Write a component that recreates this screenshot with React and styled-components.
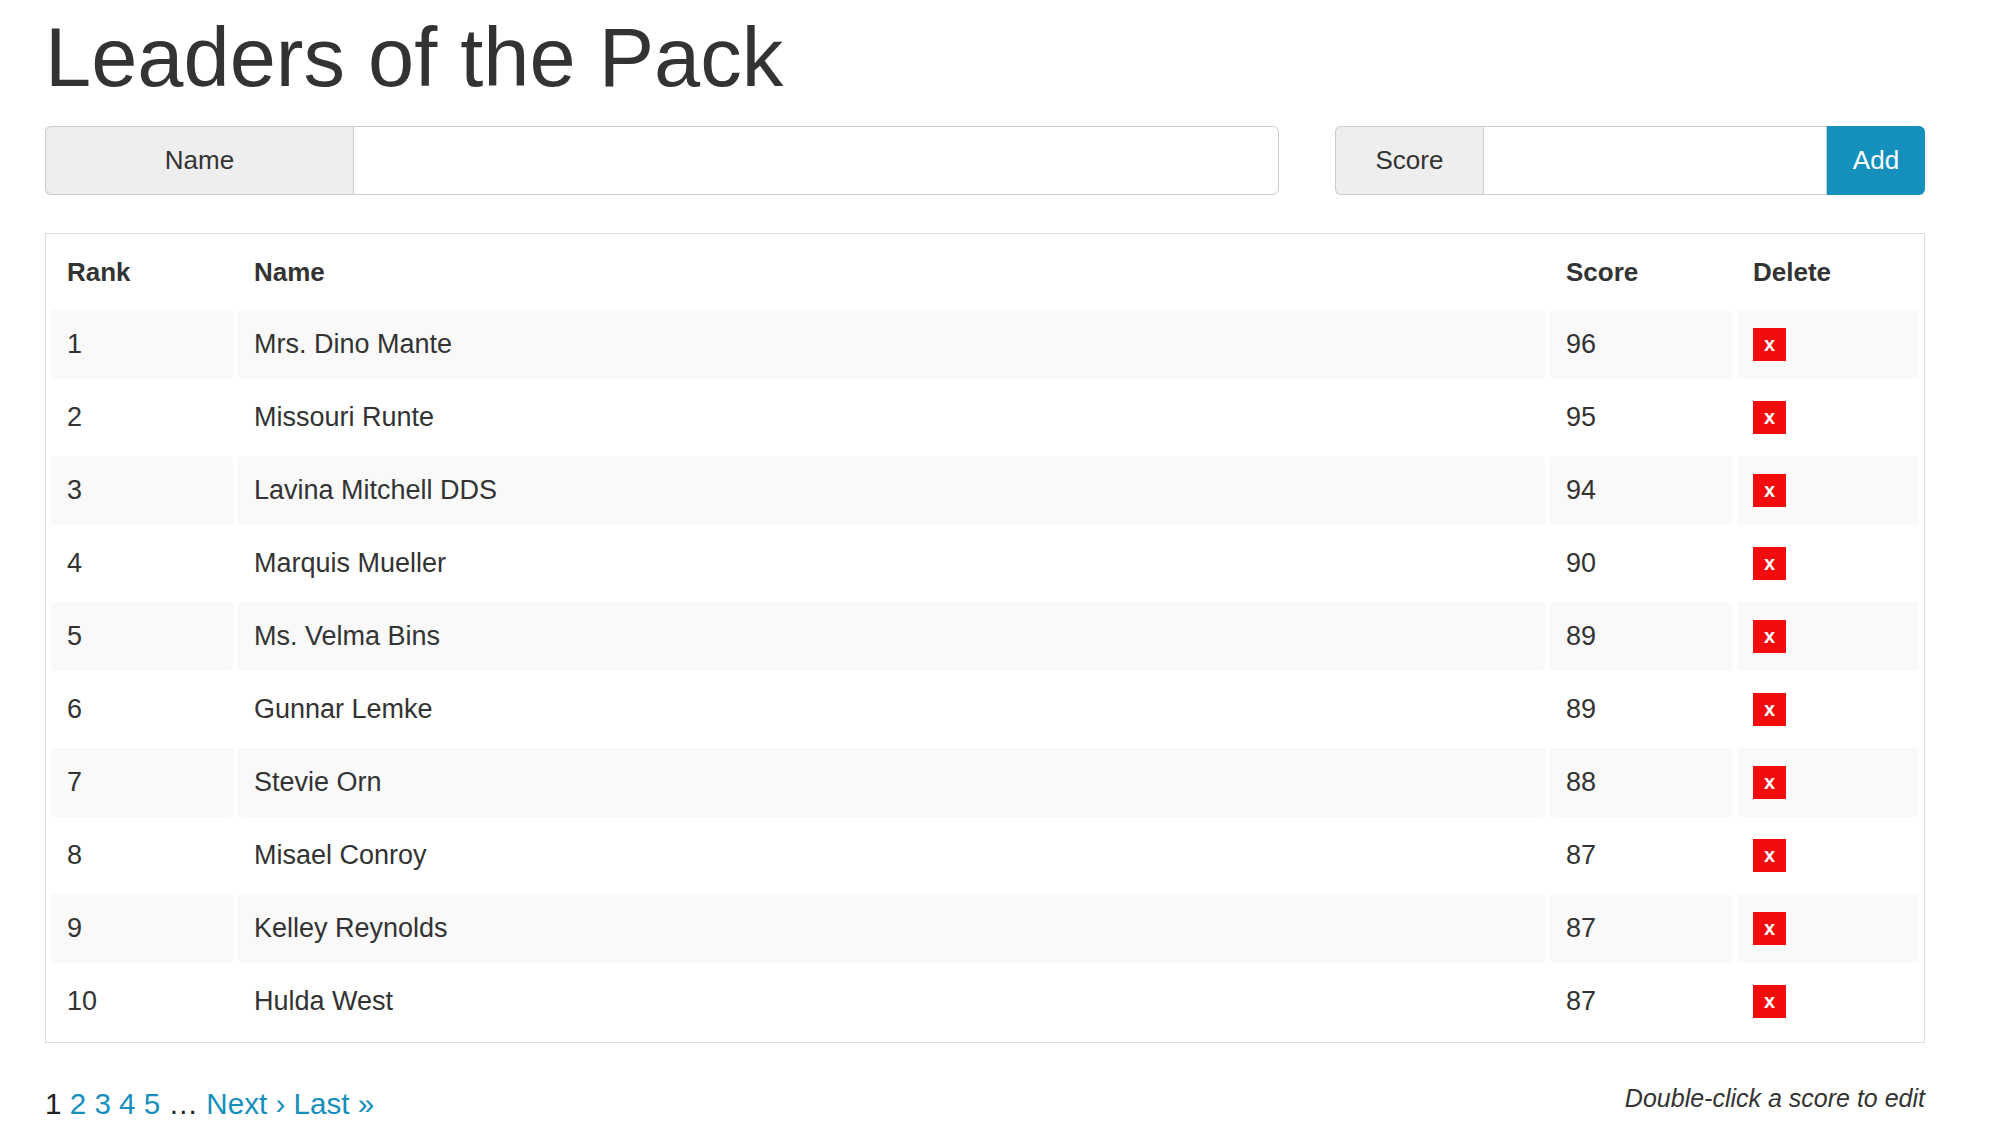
import styled, { createGlobalStyle } from 'styled-components';

const GlobalStyle = createGlobalStyle`
  body {
    margin: 0;
    background: #fff;
    color: #333;
    font-family: "Liberation Sans", Arial, sans-serif;
  }
`;

const Page = styled.div`
  width: 1880px;
  padding-left: 45px;
`;

const Title = styled.h1`
  margin: 12px 0 23px;
  font-size: 83px;
  line-height: 91px;
  font-weight: normal;
  color: #333;
`;

const Form = styled.div`
  display: flex;
  gap: 56px;
  height: 69px;
`;

const InputGroup = styled.div`
  display: flex;
  flex: ${(p) => p.grow};
  min-width: 0;
  height: 100%;
`;

const Addon = styled.span`
  display: flex;
  align-items: center;
  justify-content: center;
  flex: 0 0 ${(p) => p.width}px;
  background: #eee;
  border: 1px solid #ccc;
  border-right: none;
  border-radius: 6px 0 0 6px;
  font-size: 26px;
  color: #333;
  box-sizing: border-box;
`;

const Field = styled.input`
  flex: 1 1 0;
  width: 0;
  min-width: 0;
  border: 1px solid #ccc;
  border-radius: ${(p) => (p.last ? '0 6px 6px 0' : '0')};
  font-size: 26px;
  padding: 0 16px;
  font-family: inherit;
  outline: none;
`;

const AddButton = styled.button`
  flex: 0 0 98px;
  border: none;
  border-radius: 0 6px 6px 0;
  background: #1590bd;
  color: #fff;
  font-size: 26px;
  font-family: inherit;
  cursor: pointer;
`;

const TableBox = styled.div`
  margin-top: 38px;
  border: 1px solid #ddd;
  padding-bottom: 2px;
`;

const Table = styled.table`
  width: 100%;
  border-collapse: separate;
  border-spacing: 5px 4px;
  font-size: 27px;
  color: #333;
`;

const Th = styled.th`
  text-align: left;
  height: 68px;
  padding: 0 16px;
  font-weight: bold;
  font-size: 26px;
  box-sizing: border-box;
  width: ${(p) => p.width || 'auto'};
`;

const Row = styled.tr`
  td {
    background: ${(p) => (p.striped ? '#f9f9f9' : 'transparent')};
  }
`;

const Td = styled.td`
  height: 69px;
  padding: 0 16px;
  border-radius: 4px;
  box-sizing: border-box;
`;

const DeleteButton = styled.button`
  width: 33px;
  height: 33px;
  padding: 0;
  border: none;
  background: #f20c0c;
  color: #fff;
  font-family: "Liberation Sans", Arial, sans-serif;
  font-weight: bold;
  font-size: 20px;
  line-height: 33px;
  display: block;
  cursor: pointer;
`;

const Footer = styled.div`
  display: flex;
  justify-content: space-between;
  align-items: flex-start;
  margin-top: 43px;
`;

const Pager = styled.div`
  font-size: 29.6px;
  line-height: 36px;
  color: #222;
`;

const PageLink = styled.a`
  color: #168fbd;
  text-decoration: none;
  cursor: pointer;
`;

const Hint = styled.em`
  font-size: 25px;
  line-height: 24px;
  color: #333;
`;

const leaders = [
  ['Mrs. Dino Mante', 96],
  ['Missouri Runte', 95],
  ['Lavina Mitchell DDS', 94],
  ['Marquis Mueller', 90],
  ['Ms. Velma Bins', 89],
  ['Gunnar Lemke', 89],
  ['Stevie Orn', 88],
  ['Misael Conroy', 87],
  ['Kelley Reynolds', 87],
  ['Hulda West', 87],
];

export default function App() {
  return (
    <>
      <GlobalStyle />
      <Page>
        <Title>Leaders of the Pack</Title>
        <Form>
          <InputGroup grow="0 0 1234px">
            <Addon width={308}>Name</Addon>
            <Field last />
          </InputGroup>
          <InputGroup grow="1 1 0">
            <Addon width={148}>Score</Addon>
            <Field />
            <AddButton>Add</AddButton>
          </InputGroup>
        </Form>
        <TableBox>
          <Table>
            <thead>
              <tr>
                <Th width="182px">Rank</Th>
                <Th>Name</Th>
                <Th width="182px">Score</Th>
                <Th width="182px">Delete</Th>
              </tr>
            </thead>
            <tbody>
              {leaders.map(([name, score], i) => (
                <Row key={name} striped={i % 2 === 0}>
                  <Td>{i + 1}</Td>
                  <Td>{name}</Td>
                  <Td>{score}</Td>
                  <Td>
                    <DeleteButton>x</DeleteButton>
                  </Td>
                </Row>
              ))}
            </tbody>
          </Table>
        </TableBox>
        <Footer>
          <Pager>
            1 <PageLink>2</PageLink> <PageLink>3</PageLink> <PageLink>4</PageLink>{' '}
            <PageLink>5</PageLink> … <PageLink>Next ›</PageLink> <PageLink>Last »</PageLink>
          </Pager>
          <Hint>Double-click a score to edit</Hint>
        </Footer>
      </Page>
    </>
  );
}
